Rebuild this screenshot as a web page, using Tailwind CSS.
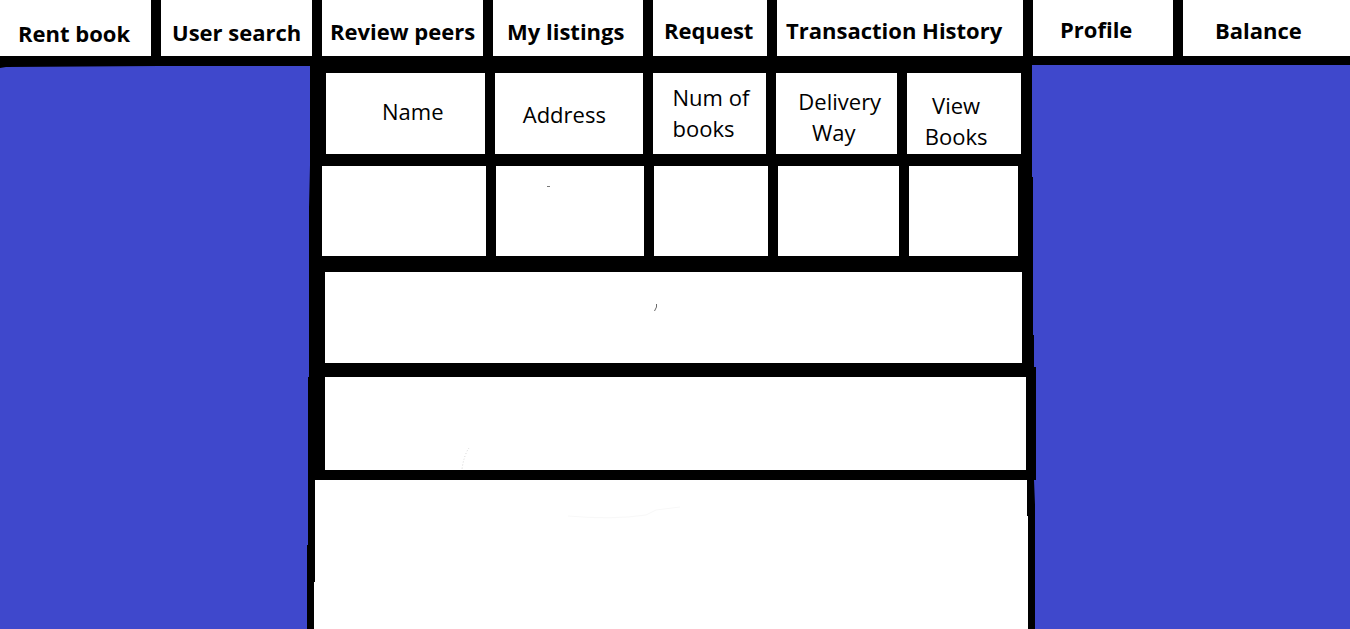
<!DOCTYPE html>
<html lang="en">
<head>
<meta charset="utf-8">
<meta name="viewport" content="width=device-width, initial-scale=1">
<title>Request</title>
<script src="https://cdn.jsdelivr.net/npm/@tailwindcss/browser@4"></script>
</head>
<body class="flex min-h-screen flex-col bg-black font-['Open_Sans','Noto_Sans',sans-serif] text-[22px] leading-[31px] text-black">
<nav class="grid min-h-14 grid-cols-[151fr_151fr_161fr_150fr_114fr_246fr_140fr_167fr] gap-[10px] whitespace-nowrap font-bold">
  <a href="#" class="min-w-0 bg-white pt-[18px] pl-[18px]">Rent book</a>
  <a href="#" class="min-w-0 bg-white pt-[17px] pl-[11px]">User search</a>
  <a href="#" class="min-w-0 bg-white pt-4 pl-2">Review peers</a>
  <a href="#" class="min-w-0 bg-white pt-4 pl-[14px]">My listings</a>
  <a href="#" class="min-w-0 bg-white pt-[15px] pl-[11px]">Request</a>
  <a href="#" class="min-w-0 bg-white pt-[15px] pl-[9px]">Transaction History</a>
  <a href="#" class="min-w-0 bg-white pt-[14px] pl-[27px]">Profile</a>
  <a href="#" class="min-w-0 bg-white pt-[15px] pl-8">Balance</a>
</nav>
<div class="grid grow grid-cols-[310fr_722fr_318fr] pt-[9px]">
  <aside class="bg-[#3f48cc] [clip-path:polygon(0_3px,6px_2px,160px_1px,100%_1px,100%_100px,calc(100%-1px)_143px,calc(100%-1px)_312px,calc(100%-2px)_312px,calc(100%-2px)_480px,calc(100%-3px)_480px,calc(100%-3px)_100%,0_100%)]"></aside>
  <main class="flex flex-col">
    <table class="block w-full pt-2">
      <thead class="block">
        <tr class="mr-[11px] ml-4 grid min-h-[81px] grid-cols-[159fr_148fr_114fr_121fr_114fr] gap-[10px] *:min-w-0 *:bg-white *:font-normal">
          <th scope="col" class="pt-[23px] pl-14 text-left">Name</th>
          <th scope="col" class="pt-[26px] pl-7 text-left">Address</th>
          <th scope="col" class="pt-[9px] pl-5 text-left">Num of<br>books</th>
          <th scope="col" class="pt-[13px] pl-[6px] text-center">Delivery<span class="block pr-3">Way</span></th>
          <th scope="col" class="pt-[17px] pr-4 text-center">View<br>Books</th>
        </tr>
      </thead>
      <tbody class="block">
        <tr class="mt-3 mr-[14px] ml-3 grid h-[90px] grid-cols-[164fr_148fr_114fr_121fr_109fr] gap-[10px] *:min-w-0 *:bg-white">
          <td></td>
          <td><svg class="mt-5 ml-[51px] h-px w-[3px]" viewBox="0 0 3 1" aria-hidden="true"><path d="M0 0h3v1H0z" fill="#777"/></svg></td>
          <td></td><td></td><td></td>
        </tr>
        <tr class="mt-4 mr-[10px] ml-[15px] grid h-[91px] grid-cols-1">
          <td colspan="5" class="bg-white"><svg class="mt-8 ml-[329px] h-[7px] w-1" viewBox="0 0 4 7" aria-hidden="true"><path d="M2.500 0v3L1.500 5L.5 7" stroke="#444" stroke-width=".8" fill="none"/></svg></td>
        </tr>
        <tr class="mt-[14px] mr-[6px] ml-[15px] grid h-[93px] grid-cols-1">
          <td colspan="5" class="bg-white"><svg class="mt-[70px] ml-[134px] h-[23px] w-3" viewBox="0 0 12 23" aria-hidden="true"><path d="M10 1Q5 8 3 22" stroke="#bbb" stroke-width=".6" stroke-dasharray="1 2" fill="none"/></svg></td>
        </tr>
      </tbody>
    </table>
    <section class="mt-[10px] mr-1 ml-1 grow bg-white [clip-path:polygon(1px_0,calc(100%-1px)_0,calc(100%-1px)_36px,100%_36px,100%_100%,0_100%,0_102px,1px_102px)]" aria-label="Details">
      <svg class="mt-[26px] ml-[254px] h-[14px] w-[116px]" viewBox="0 0 116 14" aria-hidden="true"><path d="M0 10Q45 14 78 9L88 4L112 1" stroke="#f8f8f8" fill="none"/></svg>
    </section>
  </main>
  <aside class="bg-[#3f48cc] [clip-path:polygon(0_0,0_112px,1px_112px,1px_270px,2px_270px,2px_302px,4px_302px,4px_415px,2px_415px,3px_440px,3px_100%,100%_100%,100%_0)]"></aside>
</div>
</body>
</html>
